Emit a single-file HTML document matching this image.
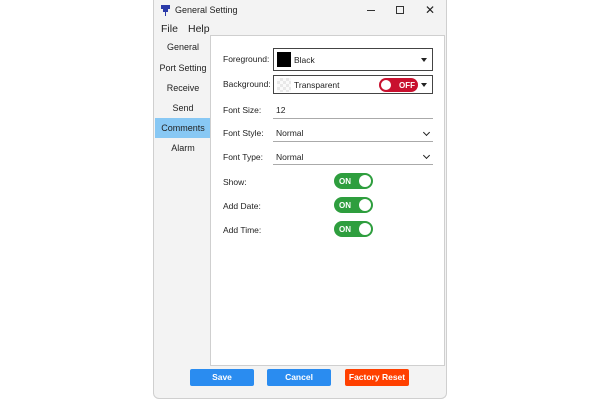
<!DOCTYPE html>
<html><head><meta charset="utf-8"><style>
*{box-sizing:border-box;margin:0;padding:0}
body{width:600px;height:400px;background:#fff;position:relative;font-family:"Liberation Sans",sans-serif;overflow:hidden}
.win{position:absolute;left:153px;top:0;width:294px;height:399px;background:#f3f3f3;border:1px solid #cfcfcf;border-top:none;border-radius:0 0 6px 6px}
.t{position:absolute;font-size:9px;color:#222;white-space:nowrap}
.side{position:absolute;left:1px;width:56px;text-align:center;font-size:9px;color:#222}
.panel{position:absolute;left:56px;top:35px;width:235px;height:331px;background:#fff;border:1px solid #cfcfcf}
.lbl{position:absolute;left:12px;font-size:8.5px;color:#222}
.box{position:absolute;left:62px;width:160px;border:1px solid #444;background:#fff}
.ul{position:absolute;left:62px;width:160px;border-bottom:1px solid #aaa;font-size:8.5px;color:#222;height:16px;padding-left:3px}
.tg{position:absolute;left:123px;width:39px;height:16px;border-radius:8px;background:#2e9e3e;color:#fff;font-size:8px;font-weight:bold;padding:4px 0 0 5px}
.tg:after{content:"";position:absolute;right:2px;top:2px;width:12px;height:12px;border-radius:50%;background:#fff}
.btn{position:absolute;top:369px;width:64px;height:17px;border-radius:2px;color:#fff;font-size:8.5px;font-weight:bold;text-align:center;line-height:17px}
.arr{position:absolute;right:5px;width:0;height:0;border-left:3px solid transparent;border-right:3px solid transparent;border-top:4px solid #222}
.chev{position:absolute;right:4px;top:4px;width:5px;height:5px;border-right:1.2px solid #222;border-bottom:1.2px solid #222;transform:rotate(45deg)}
</style></head><body>
<div class="win">
 <svg style="position:absolute;left:6px;top:4px" width="11" height="12" viewBox="0 0 11 12"><path d="M1 1h9v4h-2v3H6v4H5V8H3V5H1z" fill="#2a3aa8"/></svg>
 <div class="t" style="left:21px;top:5px">General Setting</div>
 <div style="position:absolute;left:213px;top:10px;width:8px;border-top:1px solid #333"></div>
 <div style="position:absolute;left:242px;top:6px;width:8px;height:8px;border:1px solid #333"></div>
 <div class="t" style="left:271px;top:3px;font-size:12px">✕</div>
 <div class="t" style="left:7px;top:23px;font-size:10.5px">File</div>
 <div class="t" style="left:34px;top:23px;font-size:10.5px">Help</div>
 <div class="side" style="top:42px">General</div>
 <div class="side" style="top:63px">Port Setting</div>
 <div class="side" style="top:83px">Receive</div>
 <div class="side" style="top:103px">Send</div>
 <div class="side" style="top:118px;height:20px;line-height:20px;background:#88c8f4">Comments</div>
 <div class="side" style="top:143px">Alarm</div>
 <div class="panel">
  <div class="lbl" style="top:18px">Foreground:</div>
  <div class="box" style="top:12px;height:23px"><div style="position:absolute;left:3px;top:3px;width:14px;height:15px;background:#000"></div><span class="t" style="left:20px;top:6px;font-size:8.5px">Black</span><div class="arr" style="top:9px"></div></div>
  <div class="lbl" style="top:43px">Background:</div>
  <div class="box" style="top:39px;height:19px"><div style="position:absolute;left:3px;top:2px;width:14px;height:14px;background:repeating-conic-gradient(#e8e8e8 0 25%,#fafafa 0 50%) 0 0/6px 6px"></div><span class="t" style="left:20px;top:4px;font-size:8.5px">Transparent</span>
   <div style="position:absolute;left:105px;top:2px;width:39px;height:14px;border-radius:7px;background:#c8102e;color:#fff;font-size:8px;font-weight:bold;padding:3px 0 0 20px">OFF<div style="position:absolute;left:2px;top:2px;width:10px;height:10px;border-radius:50%;background:#fff"></div></div>
   <div class="arr" style="top:7px"></div></div>
  <div class="lbl" style="top:69px">Font Size:</div>
  <div class="ul" style="top:67px;padding-top:2px">12</div>
  <div class="lbl" style="top:92px">Font Style:</div>
  <div class="ul" style="top:90px;padding-top:2px">Normal<span class="chev"></span></div>
  <div class="lbl" style="top:116px">Font Type:</div>
  <div class="ul" style="top:113px;padding-top:3px">Normal<span class="chev"></span></div>
  <div class="lbl" style="top:141px">Show:</div>
  <div class="tg" style="top:137px">ON</div>
  <div class="lbl" style="top:165px">Add Date:</div>
  <div class="tg" style="top:161px">ON</div>
  <div class="lbl" style="top:189px">Add Time:</div>
  <div class="tg" style="top:185px">ON</div>
 </div>
</div>
<div class="btn" style="left:190px;background:#2a8cf0">Save</div>
<div class="btn" style="left:267px;background:#2a8cf0">Cancel</div>
<div class="btn" style="left:345px;background:#ff4000">Factory Reset</div>
</body></html>
